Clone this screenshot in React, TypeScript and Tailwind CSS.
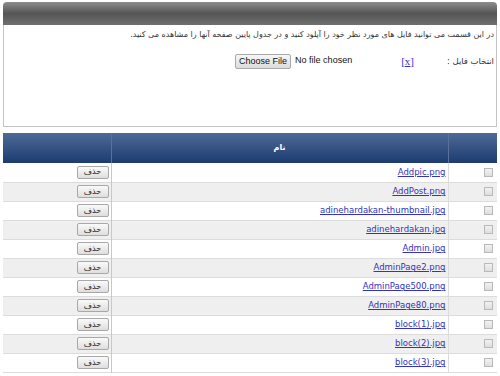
import React from 'react';

const files = [
    'Addpic.png',
    'AddPost.png',
    'adinehardakan-thumbnail.jpg',
    'adinehardakan.jpg',
    'Admin.jpg',
    'AdminPage2.png',
    'AdminPage500.png',
    'AdminPage80.png',
    'block(1).jpg',
    'block(2).jpg',
    'block(3).jpg',
];

const App: React.FC = () => {
    return (
        <div className="w-[500px] h-[376px] overflow-hidden bg-white px-[3px] pt-[2px] font-['DejaVu_Sans',sans-serif]">
            {/* Top panel */}
            <div className="h-[23px] rounded-t-[4px] bg-gradient-to-b from-[#8e8e8e] via-[#555555] to-[#707070]"></div>
            <div dir="rtl" className="h-[102px] border border-t-0 border-[#c4c4c4] pr-[2px] pt-[3px]">
                <p className="text-[8px] leading-[14px] text-[#333]">
                    در این قسمت می توانید فایل های مورد نظر خود را آپلود کنید و در جدول پایین صفحه آنها را مشاهده می کنید.
                </p>
                <div className="flex items-center mt-[11px] h-[16px] whitespace-nowrap">
                    <span className="w-[80px] text-[8.5px] text-[#333]">انتخاب فایل :</span>
                    <a href="#" className="text-[11px] text-[#3333cc] underline font-['Liberation_Serif',serif]">[x]</a>
                    <div dir="ltr" className="mr-[49px] flex items-center font-['Liberation_Sans',sans-serif] text-[9px]">
                        <span className="px-[3px] h-[15px] leading-[13px] border border-[#a9a9a9] rounded-[2px] bg-gradient-to-b from-[#f6f6f6] to-[#dcdcdc] text-[#111]">Choose File</span>
                        <span className="ml-[4px] text-[#111]">No file chosen</span>
                    </div>
                </div>
            </div>

            {/* Files table */}
            <table dir="rtl" className="mt-[6px] w-[494px] table-fixed border-collapse">
                <thead>
                    <tr className="h-[30px] bg-gradient-to-b from-[#4f6a96] to-[#1c3b70]">
                        <th className="w-[49px] border-l border-[#5a729a]"></th>
                        <th className="w-[337px] border-l border-[#5a729a] text-[8px] font-bold text-white">نام</th>
                        <th></th>
                    </tr>
                </thead>
                <tbody>
                    {files.map((name, i) => (
                        <tr key={name} className={`border-b border-[#dcdcdc] ${i % 2 === 1 ? 'bg-[#efefef]' : 'bg-white'}`}>
                            <td className="h-[19px] p-0 pr-[4px] border-l border-[#dcdcdc] leading-none align-middle">
                                <span className="block w-[9px] h-[9px] border border-[#b9b9b9] bg-gradient-to-b from-[#f2f2f2] to-[#dedede]"></span>
                            </td>
                            <td className="h-[19px] p-0 pr-[2px] border-l border-[#c8c8c8] text-[8.5px] leading-none align-middle">
                                <a href="#" className="text-[#3333bb] underline">{name}</a>
                            </td>
                            <td className="h-[19px] p-0 pr-[2px] leading-none align-middle">
                                <span className="flex items-center justify-center w-[32px] h-[13px] border border-[#a8a8a8] rounded-[2px] bg-gradient-to-b from-[#fafafa] to-[#dedede] text-[8px] text-[#222]">حذف</span>
                            </td>
                        </tr>
                    ))}
                </tbody>
            </table>
        </div>
    );
};

export default App;
